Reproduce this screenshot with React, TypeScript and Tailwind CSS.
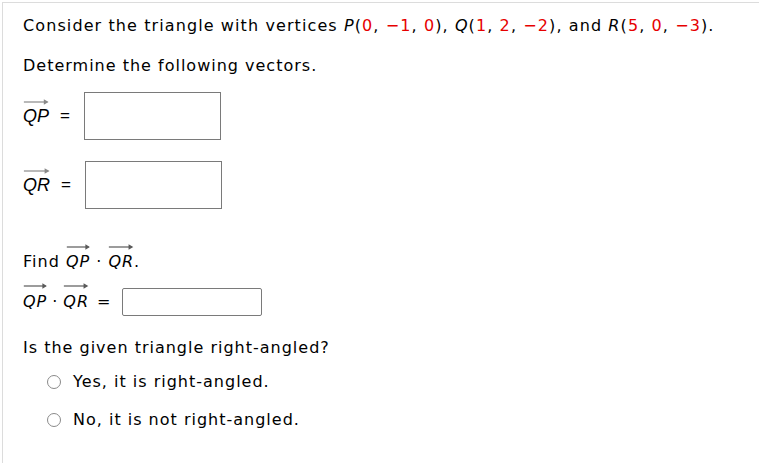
import React from 'react'

const verdana = { fontFamily: '"DejaVu Sans", Verdana, sans-serif' }
const arial = { fontFamily: '"Liberation Sans", Arial, sans-serif' }

function Arrow({ light }: { light?: boolean }) {
  const c = light ? '#8a8a8a' : '#5a5a5a'
  return (
    <svg
      className={
        light
          ? 'absolute left-0 top-[-5px] w-full h-[8px] overflow-visible'
          : 'absolute left-0 top-[-8px] w-full h-[8px] overflow-visible'
      }
      viewBox="0 0 30 8"
      preserveAspectRatio="none"
    >
      <line x1="1" y1="4" x2="28" y2="4" stroke={c} strokeWidth="1.2" />
      <path d="M24 1.2 L29.5 4 L24 6.8 Z" fill={c} />
    </svg>
  )
}

function Vec({ name }: { name: string }) {
  return (
    <span className="relative inline-block italic">
      <Arrow />
      {name}
    </span>
  )
}

function LabelVec({ name }: { name: string }) {
  return (
    <span className="relative inline-block italic text-[18px] tracking-normal" style={arial}>
      <Arrow light />
      {name}
    </span>
  )
}

function Red({ children }: { children: React.ReactNode }) {
  return <span className="text-[#e60000]">{children}</span>
}

function Radio({ label }: { label: string }) {
  return (
    <label className="flex items-center gap-[12px] pl-[24px]">
      <span className="w-[14px] h-[14px] rounded-full border border-[#8a8a8a] bg-white inline-block" />
      <span>{label}</span>
    </label>
  )
}

export default function App() {
  return (
    <div className="w-[759px] h-[463px] bg-white overflow-hidden">
      <div
        className="mt-[2px] ml-[2px] h-full border-l border-t border-[#dcdcdc] pl-[20px] text-[16px] tracking-[1.1px] text-black"
        style={verdana}
      >
        <p className="pt-[12px] leading-[22px] whitespace-nowrap">
          Consider the triangle with vertices <i>P</i>(<Red>0</Red>, <Red>−1</Red>, <Red>0</Red>),{' '}
          <i>Q</i>(<Red>1</Red>, <Red>2</Red>, <Red>−2</Red>), and <i>R</i>(<Red>5</Red>, <Red>0</Red>,{' '}
          <Red>−3</Red>).
        </p>

        <p className="mt-[18px] leading-[22px] tracking-[1px]">Determine the following vectors.</p>

        <div className="mt-[15px] flex items-center">
          <LabelVec name="QP" />
          <span className="ml-[11px] w-[24px] text-[17px]" style={arial}>
            =
          </span>
          <span className="w-[137px] h-[48px] border border-[#7a7a7a] bg-white" />
        </div>

        <div className="mt-[21px] flex items-center">
          <LabelVec name="QR" />
          <span className="ml-[11px] w-[24px] text-[17px]" style={arial}>
            =
          </span>
          <span className="w-[137px] h-[48px] border border-[#7a7a7a] bg-white" />
        </div>

        <p className="mt-[42px] leading-[22px] tracking-[1px]">
          Find <Vec name="QP" /> · <Vec name="QR" />.
        </p>

        <div className="mt-[15px] flex items-center tracking-[1px]">
          <Vec name="QP" />
          <span className="mx-[5px]">·</span>
          <Vec name="QR" />
          <span className="ml-[8px] mr-[11px]">=</span>
          <span className="w-[140px] h-[28px] border border-[#7a7a7a] bg-white rounded-[2px]" />
        </div>

        <p className="mt-[21px] leading-[22px] tracking-[1px]">Is the given triangle right-angled?</p>

        <div className="mt-[12px] flex flex-col gap-[16px] leading-[22px] tracking-[1px]">
          <Radio label="Yes, it is right-angled." />
          <Radio label="No, it is not right-angled." />
        </div>
      </div>
    </div>
  )
}
